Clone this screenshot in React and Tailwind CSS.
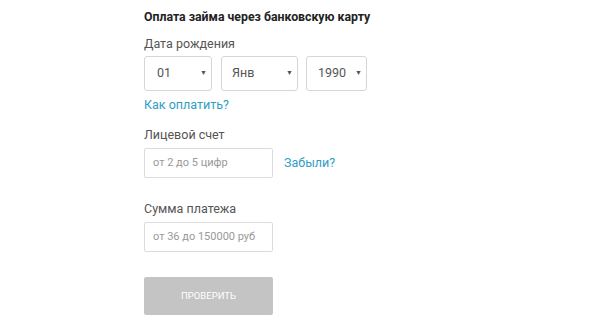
export default function App() {
  return (
    <div className="w-[600px] h-[332px] bg-white font-['Roboto',sans-serif] overflow-hidden">
      <div className="pl-[144px] pt-[9px]">
        <h1 className="text-[12.3px] leading-[16px] font-bold text-[#222]">
          Оплата займа через банковскую карту
        </h1>

        <div className="mt-[11px] text-[12.5px] leading-[15px] text-[#555]">Дата рождения</div>
        <div className="mt-[5px] flex">
          <div className="w-[68px] h-[35px] border border-[#d6d6d6] rounded-[3px] flex items-center justify-between pl-[12px] pr-[4px] text-[12.5px] text-[#555]">
            <span>01</span>
            <span className="text-[7px] text-[#555]">▼</span>
          </div>
          <div className="ml-[9px] w-[77px] h-[35px] border border-[#d6d6d6] rounded-[3px] flex items-center justify-between pl-[10px] pr-[4px] text-[12.5px] text-[#555]">
            <span>Янв</span>
            <span className="text-[7px] text-[#555]">▼</span>
          </div>
          <div className="ml-[8px] w-[61px] h-[35px] border border-[#d6d6d6] rounded-[3px] flex items-center justify-between pl-[11px] pr-[4px] text-[12.5px] text-[#555]">
            <span>1990</span>
            <span className="text-[7px] text-[#555]">▼</span>
          </div>
        </div>
        <div className="mt-[6px] text-[12.5px] leading-[15px] text-[#2f9ec3]">Как оплатить?</div>

        <div className="mt-[15px] text-[12.5px] leading-[15px] text-[#555]">Лицевой счет</div>
        <div className="mt-[6px] flex items-center">
          <div className="w-[129px] h-[30px] border border-[#dcdcdc] rounded-[2px] flex items-center pl-[8px] text-[11px] text-[#999]">
            от 2 до 5 цифр
          </div>
          <span className="ml-[11px] text-[12.5px] text-[#2f9ec3]">Забыли?</span>
        </div>

        <div className="mt-[23px] text-[12.5px] leading-[15px] text-[#555]">Сумма платежа</div>
        <div className="mt-[6px] w-[129px] h-[30px] border border-[#dcdcdc] rounded-[2px] flex items-center pl-[8px] text-[11px] text-[#999]">
          от 36 до 150000 руб
        </div>

        <button className="mt-[25px] w-[129px] h-[38px] bg-[#c4c4c4] rounded-[2px] text-[9.5px] text-white uppercase">
          Проверить
        </button>
      </div>
    </div>
  );
}
